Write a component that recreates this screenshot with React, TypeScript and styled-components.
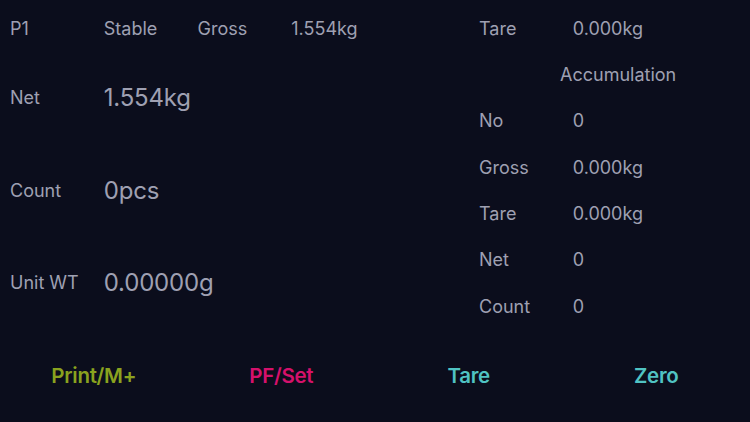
import React from "react";
import styled, { createGlobalStyle } from "styled-components";

const Global = createGlobalStyle`
  html, body { margin: 0; padding: 0; background: #0b0d1c; }
  body { font-family: Inter, "Noto Sans", sans-serif; }
`;

const U = 46.33;

const Screen = styled.div`
  width: 750px;
  height: 422px;
  background: #0b0d1c;
  color: #9fa0b2;
  padding-top: 5px;
  box-sizing: border-box;
  display: flex;
  flex-direction: column;
  overflow: hidden;
`;

const Main = styled.div`
  display: flex;
  height: ${7 * U}px;
`;

const Half = styled.div`
  width: 375px;
  display: flex;
  flex-direction: column;
`;

const Row = styled.div<{ $units: number }>`
  height: ${(p) => p.$units * U}px;
  display: flex;
  align-items: center;
  padding-left: 10px;
`;

const RightRow = styled(Row)`
  padding-left: 104px;
`;

const Cell = styled.span<{ $w?: number }>`
  width: ${(p) => p.$w ?? 93.75}px;
  flex: none;
  font-size: 18px;
  white-space: nowrap;
`;

const Big = styled.span`
  font-size: 24px;
  letter-spacing: -0.2px;
  white-space: nowrap;
`;

const Title = styled.span`
  font-size: 18px;
  padding-left: 81px;
`;

const Buttons = styled.div`
  height: ${2 * U}px;
  display: grid;
  grid-template-columns: repeat(4, 1fr);
  align-items: center;
`;

const Btn = styled.button<{ $c: string }>`
  background: none;
  border: none;
  padding: 0;
  font-family: Inter, "Noto Sans", sans-serif;
  font-weight: 600;
  font-size: 20.5px;
  letter-spacing: -0.3px;
  color: ${(p) => p.$c};
  justify-self: center;
  cursor: pointer;
`;

const accum: [string, string][] = [
  ["No", "0"],
  ["Gross", "0.000kg"],
  ["Tare", "0.000kg"],
  ["Net", "0"],
  ["Count", "0"],
];

export default function App() {
  return (
    <>
      <Global />
      <Screen>
        <Main>
          <Half>
            <Row $units={1}>
              <Cell>P1</Cell>
              <Cell>Stable</Cell>
              <Cell>Gross</Cell>
              <Cell>1.554kg</Cell>
            </Row>
            <Row $units={2}>
              <Cell>Net</Cell>
              <Big>1.554kg</Big>
            </Row>
            <Row $units={2}>
              <Cell>Count</Cell>
              <Big>0pcs</Big>
            </Row>
            <Row $units={2}>
              <Cell>Unit WT</Cell>
              <Big>0.00000g</Big>
            </Row>
          </Half>
          <Half>
            <RightRow $units={1}>
              <Cell>Tare</Cell>
              <Cell>0.000kg</Cell>
            </RightRow>
            <RightRow $units={1}>
              <Title>Accumulation</Title>
            </RightRow>
            {accum.map(([k, v]) => (
              <RightRow $units={1} key={k}>
                <Cell>{k}</Cell>
                <Cell>{v}</Cell>
              </RightRow>
            ))}
          </Half>
        </Main>
        <Buttons>
          <Btn $c="#8aa21f">Print/M+</Btn>
          <Btn $c="#d5116b">PF/Set</Btn>
          <Btn $c="#50c3c3">Tare</Btn>
          <Btn $c="#50c3c3">Zero</Btn>
        </Buttons>
      </Screen>
    </>
  );
}
